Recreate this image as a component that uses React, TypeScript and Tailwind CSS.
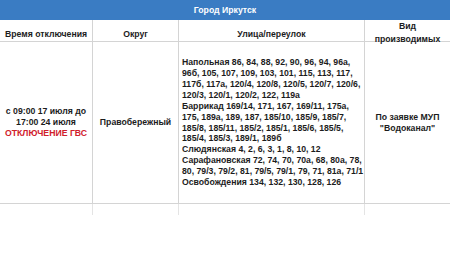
import React from "react";

const streets: string[] = [
  "Напольная 86, 84, 88, 92, 90, 96, 94, 96а,",
  "96б, 105, 107, 109, 103, 101, 115, 113, 117,",
  "117б, 117а, 120/4, 120/8, 120/5, 120/7, 120/6,",
  "120/3, 120/1, 120/2, 122, 119а",
  "Баррикад 169/14, 171, 167, 169/11, 175а,",
  "175, 189а, 189, 187, 185/10, 185/9, 185/7,",
  "185/8, 185/11, 185/2, 185/1, 185/6, 185/5,",
  "185/4, 185/3, 189/1, 189б",
  "Слюдянская 4, 2, 6, 3, 1, 8, 10, 12",
  "Сарафановская 72, 74, 70, 70а, 68, 80а, 78,",
  "80, 79/3, 79/2, 81, 79/5, 79/1, 79, 71, 81а, 71/1",
  "Освобождения 134, 132, 130, 128, 126",
];

export default function App() {
  return (
    <div
      className="w-[450px] h-[259px] bg-white overflow-hidden text-[#1c1c1c] font-bold text-[8.7px] leading-[10.9px]"
      style={{ fontFamily: '"Liberation Sans", Arial, sans-serif' }}
    >
      <div className="h-[20px] bg-[#3a7cc3] text-white flex items-center justify-center">
        Город Иркутск
      </div>
      <div className="grid grid-cols-[93px_86px_186px_85px] h-[22px] border-b border-[#d4d4d4]">
        <div className="flex items-center justify-center border-r border-[#d4d4d4]">Время отключения</div>
        <div className="flex items-center justify-center border-r border-[#d4d4d4]">Округ</div>
        <div className="flex items-center justify-center border-r border-[#d4d4d4]">Улица/переулок</div>
        <div className="flex flex-col items-center justify-center leading-[13px] pb-[2px] text-center">
          <span>Вид</span>
          <span>производимых</span>
        </div>
      </div>
      <div className="grid grid-cols-[93px_86px_186px_85px] h-[162px] border-b border-[#d4d4d4]">
        <div className="flex flex-col items-center justify-center text-center border-r border-[#d4d4d4]">
          <span>с 09:00 17 июля до</span>
          <span>17:00 24 июля</span>
          <span className="text-[#d0202b]">ОТКЛЮЧЕНИЕ ГВС</span>
        </div>
        <div className="flex items-center justify-center border-r border-[#d4d4d4]">Правобережный</div>
        <div className="flex flex-col justify-center pl-[3px] border-r border-[#d4d4d4] whitespace-nowrap">
          {streets.map((s, i) => (
            <span key={i}>{s}</span>
          ))}
        </div>
        <div className="flex flex-col items-center justify-center text-center">
          <span>По заявке МУП</span>
          <span>"Водоканал"</span>
        </div>
      </div>
      <div className="grid grid-cols-[93px_86px_186px_85px] h-[11px]">
        <div className="border-r border-[#e4e4e4]" />
        <div className="border-r border-[#e4e4e4]" />
        <div className="border-r border-[#e4e4e4]" />
        <div />
      </div>
    </div>
  );
}
